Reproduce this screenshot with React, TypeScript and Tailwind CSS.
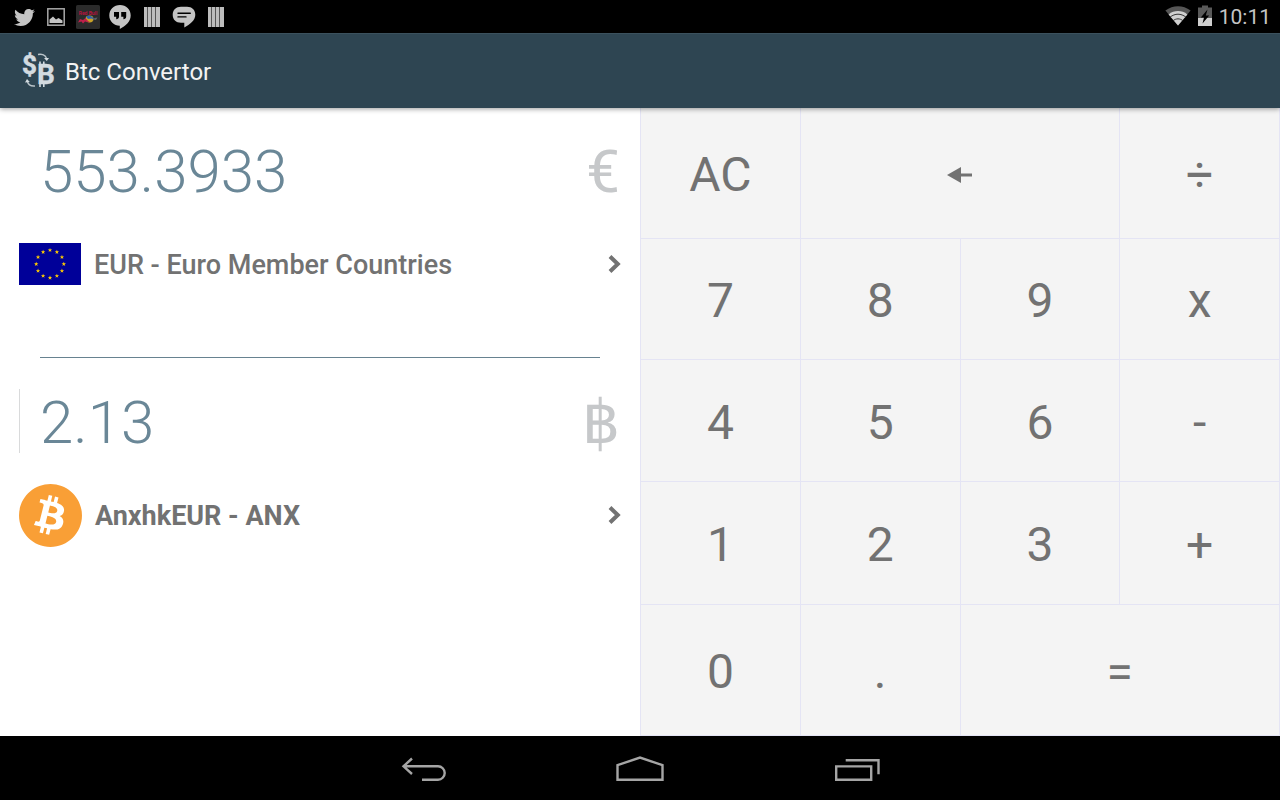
import { useState } from 'react';
import type { ReactNode } from 'react';
import { FaBitcoin, FaTwitter } from 'react-icons/fa';

interface Key {
  label: string;
  icon?: ReactNode;
  wide?: boolean;
}

const keys: Key[] = [
  { label: 'AC' },
  { label: 'Backspace', icon: <BackspaceIcon />, wide: true },
  { label: '÷' },
  { label: '7' },
  { label: '8' },
  { label: '9' },
  { label: 'x' },
  { label: '4' },
  { label: '5' },
  { label: '6' },
  { label: '-' },
  { label: '1' },
  { label: '2' },
  { label: '3' },
  { label: '+' },
  { label: '0' },
  { label: '.' },
  { label: '=', wide: true },
];

function BackspaceIcon() {
  return (
    <svg width="26" height="16" viewBox="0 0 26 16" fill="currentColor">
      <path d="M0 8L14 0V6.5H25V9.5H14V16Z" />
    </svg>
  );
}

function GalleryIcon() {
  return (
    <svg width="24" height="24" viewBox="0 0 24 24">
      <rect x="3.8" y="3.8" width="16.4" height="16.4" fill="none" stroke="#a8a8a8" strokeWidth="1.5" />
      <path d="M5.5 18V14.5L9 11.5L12 14.5L14.5 13L18.5 15.5V18Z" fill="#c4c4c4" />
    </svg>
  );
}

function RedBullIcon() {
  return (
    <svg width="24" height="24" viewBox="0 0 24 24">
      <rect width="24" height="24" rx="1.5" fill="#2b2b2b" />
      <text x="12" y="10" textAnchor="middle" fontSize="5" fontWeight="700" fill="#b5143f">
        Red Bull
      </text>
      <ellipse cx="13.5" cy="14" rx="4" ry="3.4" fill="#c9a227" />
      <path d="M10 11.5C13 10 17 11 18 14.5L15.5 13.5L12 14Z" fill="#2f62ad" />
      <path d="M2 17.5L4 14L7 15L9.5 13L12 16L14.5 17.5L9 16.5L7 18.5L5.5 16.5Z" fill="#c01f4a" />
      <path d="M16 16L18.5 13L21.5 12.5L20 15L17.5 14.5Z" fill="#5c6068" />
    </svg>
  );
}

function HangoutsIcon() {
  return (
    <svg width="24" height="24" viewBox="0 0 24 24">
      <path
        d="M12 0C5.9 0 1.3 4.6 1.3 10.5S5.9 20.8 11.8 20.8V24C17.5 21.2 22.7 16.6 22.7 10.5C22.7 4.6 18.1 0 12 0Z"
        fill="#c4c4c4"
      />
      <path d="M6 7H11V11.5C11 13.3 9.8 14.2 8.2 14.2V11.8H6ZM13.2 7H18.2V11.5C18.2 13.3 17 14.2 15.4 14.2V11.8H13.2Z" fill="#000" />
    </svg>
  );
}

function BarsIcon() {
  return (
    <svg width="24" height="24" viewBox="0 0 24 24" fill="#bdbdbd">
      <rect x="4" y="2" width="16" height="20" fill="#555" />
      <rect x="4" y="2" width="3" height="20" />
      <rect x="8" y="2" width="3" height="20" />
      <rect x="12" y="2" width="3" height="20" />
      <rect x="16" y="2" width="4" height="20" />
    </svg>
  );
}

function ChatIcon() {
  return (
    <svg width="24" height="24" viewBox="0 0 24 24">
      <path
        d="M9 1.8H15C20 1.8 23.3 5 23.3 9.8C23.3 15.5 18 19.5 12.3 22.5V17.8H9C4 17.8 .7 14.6 .7 9.8S4 1.8 9 1.8Z"
        fill="#c4c4c4"
      />
      <path d="M6 8.2H18.3M6 11.9H14" stroke="#000" strokeWidth="1.4" strokeLinecap="round" />
    </svg>
  );
}

function WifiIcon() {
  return (
    <svg width="26" height="24" viewBox="0 0 26 24" fill="none">
      <path d="M13 20.5L.4 5.5C8 -.3 18 -.3 25.6 5.5Z" fill="#565656" />
      <path d="M13 20.5L3.6 9.4C9 5 17 5 22.4 9.4Z" fill="#d0d0d0" />
      <path d="M5 12.2C10 8.2 16 8.2 21 12.2" stroke="#333" strokeWidth="1" />
      <path d="M8 15.8C11 13.2 15 13.2 18 15.8" stroke="#333" strokeWidth="1" />
    </svg>
  );
}

function BatteryIcon() {
  return (
    <svg width="14" height="24" viewBox="0 0 14 24">
      <path d="M4 .5H10V2.5H14V13H0V2.5H4Z" fill="#5a5a5a" />
      <rect y="13" width="14" height="8" fill="#d0d0d0" />
      <path d="M9.5 4.5L2.8 12.5H6L4.5 18.5L11.2 10.5H7.8Z" fill="#000" />
    </svg>
  );
}

function AppLogo() {
  return (
    <svg width="36" height="44" viewBox="0 -4 36 44" fill="#d3dbe0" fontWeight="700">
      <text x="0" y="21" fontSize="26" stroke="#d3dbe0" strokeWidth=".6">$</text>
      <text x="15" y="31" fontSize="28" stroke="#d3dbe0" strokeWidth=".4">B</text>
      <path d="M18 8.5V34M21.8 8.5V12M21.8 30V34" stroke="#d3dbe0" strokeWidth="1.6" />
      <path d="M16 1.5C20 .7 23.5 2.3 24.5 5.5M13 33C8.5 33.5 6 31 5.2 28" fill="none" stroke="#b9c3c9" strokeWidth="1.4" />
      <path d="M22 5H27L24.8 8ZM3 29.5L5 26L7.8 29Z" />
    </svg>
  );
}

function EuFlag() {
  const stars = Array.from({ length: 12 }, (_, i) => i * 30);
  return (
    <svg width="62" height="42" viewBox="0 0 62 42">
      <rect width="62" height="42" fill="#009" />
      {stars.map((deg) => {
        const x = 31 + 13.8 * Math.sin((deg * Math.PI) / 180);
        const y = 21 - 13.8 * Math.cos((deg * Math.PI) / 180);
        return (
          <path
            key={deg}
            transform={`translate(${x} ${y})`}
            d="M0 -2.3L.6 -.7H2.2L.9 .3L1.4 1.9L0 .9L-1.4 1.9L-.9 .3L-2.2 -.7H-.6Z"
            fill="#fc0"
          />
        );
      })}
    </svg>
  );
}

function Chevron() {
  return (
    <svg width="14" height="20" viewBox="0 0 14 20" fill="none" stroke="#727272" strokeWidth="4">
      <path d="M2 2.5L9.8 10L2 17.5" />
    </svg>
  );
}

interface AmountProps {
  label: string;
  symbol: string;
  value: string;
  active?: boolean;
  onChange: (value: string) => void;
}

function Amount({ label, symbol, value, active, onChange }: AmountProps) {
  return (
    <label
      className={`ml-[19px] mr-5 flex h-16 items-center border-l pl-5 pt-1 text-[60px] leading-16 ${
        active ? 'border-[#d9dadb]' : 'border-transparent'
      }`}
    >
      <input
        aria-label={label}
        className="min-w-0 flex-1 bg-transparent font-light text-[#6a8797] outline-none"
        value={value}
        onChange={(e) => onChange(e.target.value)}
      />
      <span className="text-[#c6c8ca]">{symbol}</span>
    </label>
  );
}

export default function App() {
  const [fiat, setFiat] = useState('553.3933');
  const [btc, setBtc] = useState('2.13');

  return (
    <div className="flex min-h-screen flex-col bg-white font-[Roboto,sans-serif]">
      {/* Status bar */}
      <div className="flex h-[33px] items-end justify-between bg-black pb-1 pl-2 pr-[9px]">
        <div className="flex">
          <span className="flex w-8 items-center justify-center"><FaTwitter size={21} color="#c4c4c4" /></span>
          <span className="flex w-8 justify-center"><GalleryIcon /></span>
          <span className="flex w-8 justify-center"><RedBullIcon /></span>
          <span className="flex w-8 justify-center"><HangoutsIcon /></span>
          <span className="flex w-8 justify-center"><BarsIcon /></span>
          <span className="flex w-8 justify-center"><ChatIcon /></span>
          <span className="flex w-8 justify-center"><BarsIcon /></span>
        </div>
        <div className="flex items-center gap-[7px]">
          <WifiIcon />
          <BatteryIcon />
          <span className="text-[21px] leading-6 text-[#c4c4c4]">10:11</span>
        </div>
      </div>

      {/* Action bar */}
      <header className="relative z-10 flex h-[75px] items-center gap-[7px] border-t border-[#3b515d] bg-[#2e4552] pl-[22px] shadow-[0_1px_5px_rgba(0,0,0,0.4)]">
        <AppLogo />
        <h1 className="pt-0.5 text-2xl text-[#f3f3f3]">Btc Convertor</h1>
      </header>

      <main className="grid flex-1 grid-cols-2">
        {/* Amounts */}
        <section className="flex flex-col pt-[30px]">
          <Amount label="Euro amount" symbol="€" value={fiat} onChange={setFiat} />
          <button className="mt-[30px] flex h-16 items-center gap-[13px] pl-[19px] pr-[18px] text-[27px] font-medium text-[#727272]">
            <EuFlag />
            <span className="flex-1 pt-0.5 text-left">EUR - Euro Member Countries</span>
            <Chevron />
          </button>
          <hr className="mx-10 mt-[61px] border-[#678290]" />
          <div className="mt-[31px] flex flex-col">
            <Amount label="Bitcoin amount" symbol="฿" value={btc} active onChange={setBtc} />
            <button className="mt-[30px] flex h-16 items-center gap-3 pl-[18px] pr-[18px] text-[27px] font-bold text-[#727272]">
              <FaBitcoin size={65} color="#f99f36" />
              <span className="flex-1 pt-0.5 text-left">AnxhkEUR - ANX</span>
              <Chevron />
            </button>
          </div>
        </section>

        {/* Keypad */}
        <section className="grid grid-cols-4 grid-rows-[131fr_121fr_122fr_123fr_131fr] border-l border-[#e4e4f4] bg-[#f4f4f4]">
          {keys.map((key) => (
            <button
              key={key.label}
              aria-label={key.label}
              className={`flex items-center justify-center border-b border-r border-[#e4e4f4] pt-1 text-5xl text-[#727272] ${
                key.wide ? 'col-span-2' : ''
              }`}
            >
              {key.icon ?? key.label}
            </button>
          ))}
        </section>
      </main>

      {/* Navigation bar */}
      <nav className="flex h-16 justify-center bg-black text-[#a5a5a5]">
        <button aria-label="Back" className="flex w-[216px] items-center justify-center">
          <svg width="48" height="32" viewBox="0 0 48 32" fill="none" stroke="currentColor" strokeWidth="2.4">
            <path d="M12 6.5L3.5 14.3L12 22M3.5 14.3H38A6.7 6.7 0 0 1 38 27.7H22" />
          </svg>
        </button>
        <button aria-label="Home" className="flex w-[216px] items-center justify-center">
          <svg width="48" height="32" viewBox="0 0 48 32" fill="none" stroke="currentColor" strokeWidth="2.4">
            <path d="M1.5 13.2L24 5.5L46.5 13.2V27.7H1.5Z" />
          </svg>
        </button>
        <button aria-label="Recent apps" className="flex w-[216px] items-center justify-center">
          <svg width="48" height="32" viewBox="0 0 48 32" fill="none" stroke="currentColor" strokeWidth="2.4">
            <path d="M4.2 14.4H39.2V27.7H4.2ZM13.7 8.2H46.5V22.3" />
          </svg>
        </button>
      </nav>
    </div>
  );
}
